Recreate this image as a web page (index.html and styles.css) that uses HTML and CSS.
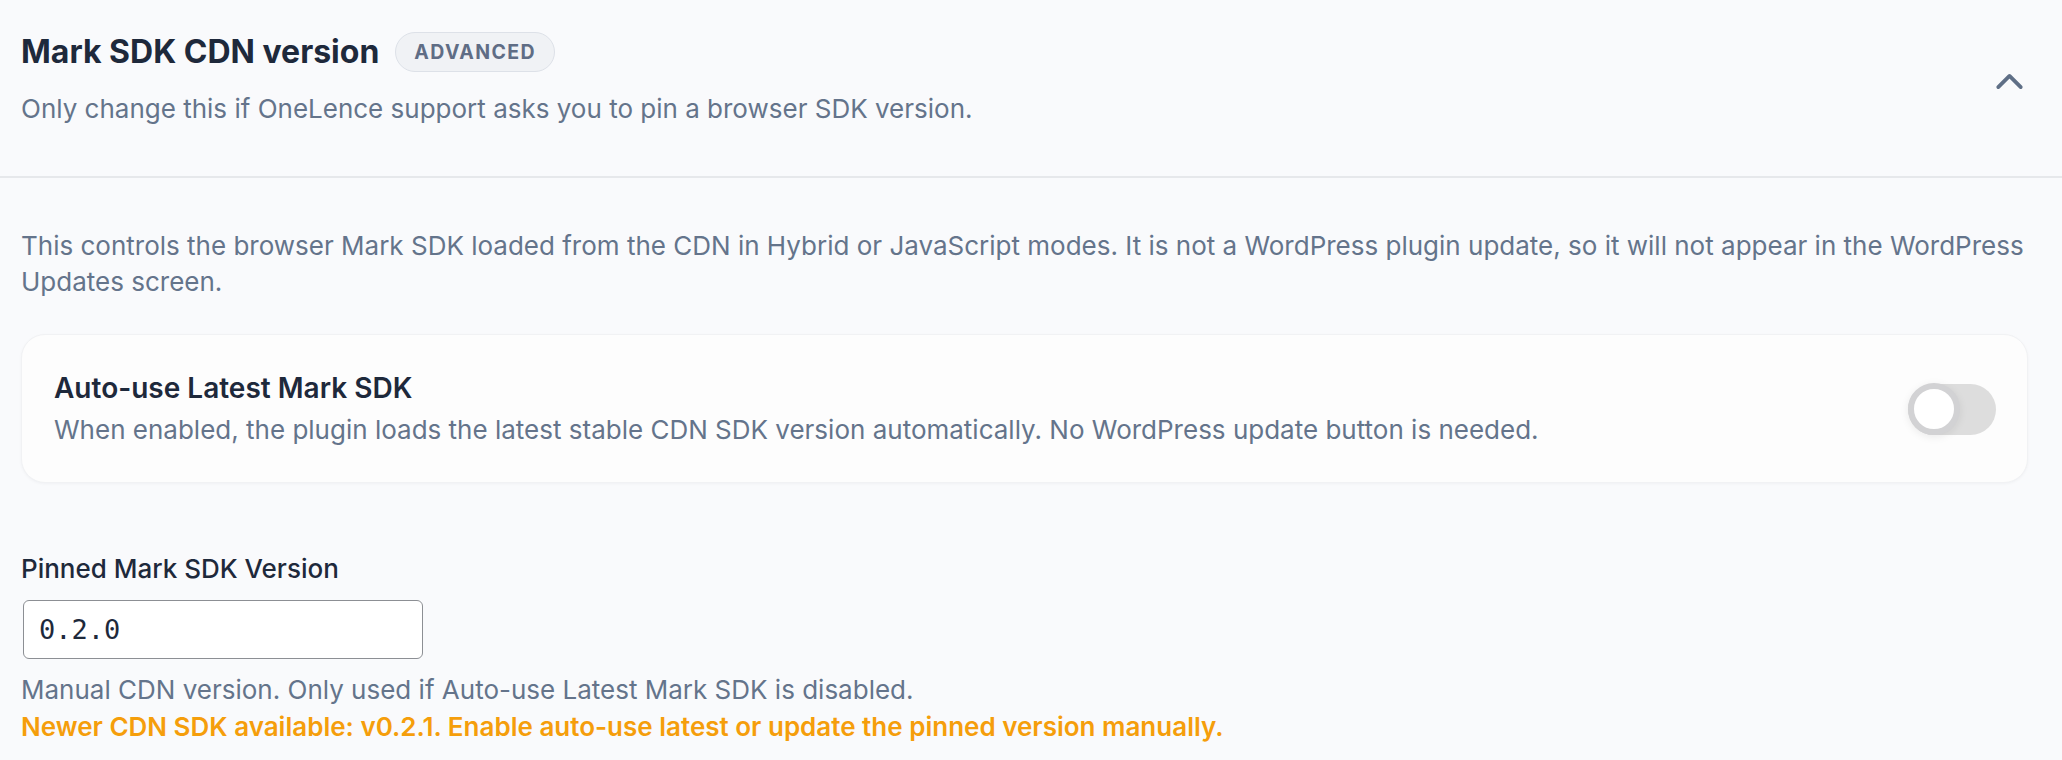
FILE: index.html
```html
<!DOCTYPE html>
<html lang="en">
<head>
  <meta charset="UTF-8">
  <meta name="viewport" content="width=device-width, initial-scale=1.0">
  <title>Mark SDK CDN version</title>
  <link rel="stylesheet" href="styles.css">
</head>
<body>
  <div class="section">
    <!-- Collapsible header -->
    <div class="section-head">
      <div class="section-info">
        <div class="section-title-row">
          <h2 class="section-title">Mark SDK CDN version</h2>
          <span class="badge">Advanced</span>
        </div>
        <p class="section-sub">Only change this if OneLence support asks you to pin a browser SDK version.</p>
      </div>
      <button class="collapse-btn" type="button" aria-label="Collapse">
        <svg viewBox="0 0 24 24" width="45" height="45" fill="none" stroke="currentColor" stroke-width="2" stroke-linecap="round" stroke-linejoin="round">
          <path d="m18 15-6-6-6 6"/>
        </svg>
      </button>
    </div>

    <!-- Section body -->
    <div class="section-body">
      <p class="note">This controls the browser Mark SDK loaded from the CDN in Hybrid or JavaScript modes. It is not a WordPress plugin update, so it will not appear in the WordPress Updates screen.</p>

      <div class="toggle-card">
        <div class="toggle-text">
          <h3>Auto-use Latest Mark SDK</h3>
          <p>When enabled, the plugin loads the latest stable CDN SDK version automatically. No WordPress update button is needed.</p>
        </div>
        <label class="switch">
          <input type="checkbox">
          <span class="track"></span>
          <span class="knob"></span>
        </label>
      </div>

      <div class="field">
        <label for="sdk_version">Pinned Mark SDK Version</label>
        <input type="text" id="sdk_version" value="0.2.0">
        <p class="help">Manual CDN version. Only used if Auto-use Latest Mark SDK is disabled.</p>
        <p class="warn">Newer CDN SDK available: v0.2.1. Enable auto-use latest or update the pinned version manually.</p>
      </div>
    </div>
  </div>
</body>
</html>
```

FILE: styles.css
```css
body {
  margin: 0;
  font-family: Inter, "Noto Sans", sans-serif;
  font-size: 26px;
  line-height: 36px;
  color: #1e293b;
  background: #f9fafc;
}

p {
  margin: 0;
}

/* Header */
.section-head {
  display: flex;
  align-items: center;
  justify-content: space-between;
  padding: 32px 21px 49px;
  border-bottom: 2px solid #e6e8eb;
}

.section-title-row {
  display: flex;
  align-items: center;
  gap: 16px;
}

.section-title {
  margin: 0;
  font-size: 32px;
  line-height: 40px;
  font-weight: 700;
  color: #1e293b;
}

.badge {
  display: inline-flex;
  align-items: center;
  box-sizing: border-box;
  height: 40px;
  padding: 0 18px;
  border: 1.5px solid #dde1e8;
  border-radius: 999px;
  background: #f0f2f5;
  color: #5f6d85;
  font-size: 19.5px;
  font-weight: 700;
  letter-spacing: 0.07em;
  text-transform: uppercase;
}

.section-sub {
  margin-top: 19px;
  color: #64748b;
}

.collapse-btn {
  background: none;
  border: none;
  padding: 0;
  margin: 3px 9px 0 0;
  color: #5f6f86;
  cursor: pointer;
  display: flex;
}

/* Body */
.section-body {
  padding: 50px 34px 0 21px;
}

.note {
  color: #64748b;
}

.toggle-card {
  display: flex;
  align-items: center;
  justify-content: space-between;
  margin-top: 34px;
  padding: 35px 31px 34px 32px;
  background: #fdfdfd;
  border: 1px solid #f1f2f4;
  border-radius: 24px;
  box-shadow: 0 1px 3px rgba(15, 23, 42, 0.04);
}

.toggle-text h3 {
  margin: 0 0 6px;
  font-size: 28px;
  line-height: 36px;
  font-weight: 600;
  color: #1e293b;
}

.toggle-text p {
  color: #64748b;
}

.switch {
  position: relative;
  display: block;
  width: 88px;
  height: 51px;
  cursor: pointer;
}

.switch input {
  display: none;
}

.track {
  display: block;
  width: 100%;
  height: 100%;
  border-radius: 999px;
  background: #dddddd;
}

.knob {
  position: absolute;
  left: 0;
  top: -1px;
  width: 40px;
  height: 40px;
  border: 6px solid #d2d2d4;
  border-radius: 50%;
  background: #ffffff;
  box-shadow: 0 2px 8px rgba(0, 0, 0, 0.08);
}

/* Pinned version field */
.field {
  margin-top: 68px;
}

.field label {
  display: block;
  font-weight: 500;
  color: #1e293b;
}

.field input {
  display: block;
  box-sizing: border-box;
  width: 400px;
  height: 59px;
  margin: 13px 0 13px 2px;
  padding: 0 15px;
  border: 1.5px solid #8c8f94;
  border-radius: 6px;
  background: #ffffff;
  font-family: "DejaVu Sans Mono", monospace;
  font-size: 27px;
  color: #1e293b;
}

.help {
  color: #64748b;
}

.warn {
  margin-top: 1px;
  color: #f59e0b;
  font-weight: 600;
}
```
